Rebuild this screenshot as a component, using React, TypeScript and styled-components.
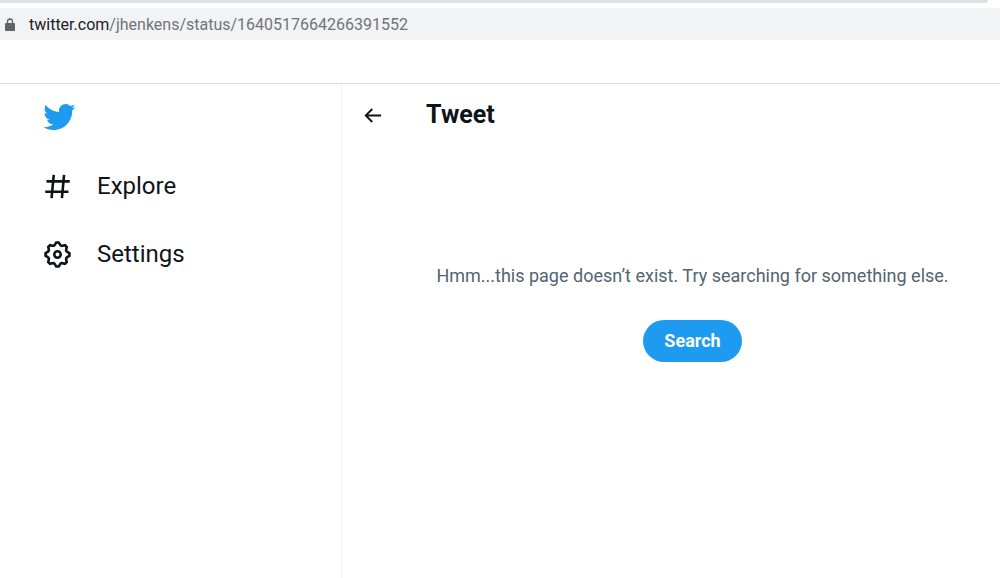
import React from "react";
import styled, { createGlobalStyle } from "styled-components";

const GlobalStyle = createGlobalStyle`
  * { box-sizing: border-box; }
  html, body, #root { height: 100%; }
  body {
    margin: 0;
    background: #ffffff;
    color: #0f1419;
    font-family: Roboto, "Liberation Sans", sans-serif;
  }
`;

const Page = styled.div`
  display: flex;
  flex-direction: column;
  min-height: 100%;
`;

const BrowserChrome = styled.div`
  border-bottom: 1px solid #d9dbdd;
  padding-bottom: 43px;
`;

const TabStrip = styled.div`
  height: 3px;
  margin-right: 12px;
  background: #dee1e6;
  border-bottom-right-radius: 3px;
`;

const AddressBar = styled.div`
  display: flex;
  align-items: center;
  gap: 13px;
  height: 32px;
  margin-top: 5px;
  padding: 2px 4px 0;
  background: #f1f3f4;
`;

const Address = styled.div`
  color: #70757a;
  font-size: 16px;
  line-height: 24px;
  white-space: nowrap;
`;

const Domain = styled.span`
  color: #202124;
`;

const Icon = styled.svg<{ $size: number }>`
  display: block;
  flex: none;
  width: ${(p) => p.$size}px;
  height: ${(p) => p.$size}px;
  fill: currentColor;
`;

const Body = styled.div`
  display: flex;
  flex: 1;
`;

const Sidebar = styled.header`
  flex: none;
  width: 342px;
  padding: 16px 0 0 42px;
  border-right: 1px solid #eff3f4;
`;

const LogoLink = styled.a`
  display: block;
  width: fit-content;
  color: #1d9bf0;
`;

const Nav = styled.nav`
  display: flex;
  flex-direction: column;
  align-items: flex-start;
  gap: 36px;
  margin-top: 36px;
`;

const NavLink = styled.a`
  display: flex;
  align-items: center;
  gap: 24px;
  color: #0f1419;
  font-size: 24px;
  line-height: 32px;
  text-decoration: none;
`;

const Main = styled.main`
  flex: 1;
  min-width: 0;
`;

const TitleBar = styled.div`
  display: flex;
  align-items: center;
  gap: 42px;
  height: 62px;
  padding-left: 19px;
`;

const BackButton = styled.button`
  padding: 0;
  border: 0;
  background: none;
  color: #0f1419;
  cursor: pointer;
`;

const Title = styled.h1`
  margin: 0;
  font-size: 25px;
  font-weight: 700;
  line-height: 32px;
`;

const EmptyState = styled.section`
  display: flex;
  flex-direction: column;
  align-items: center;
  gap: 32px;
  padding: 118px 0 0 43px;
`;

const Message = styled.p`
  margin: 0;
  color: #536471;
  font-size: 18px;
  line-height: 24px;
`;

const SearchLink = styled.a`
  padding: 0 21px;
  border-radius: 21px;
  background: #1d9bf0;
  color: #ffffff;
  font-size: 18px;
  font-weight: 700;
  line-height: 42px;
  text-decoration: none;
`;

const BIRD =
  "M23.643 4.937c-.835.37-1.732.62-2.675.733.962-.576 1.7-1.49 2.048-2.578-.9.534-1.897.922-2.958 1.13-.85-.904-2.06-1.47-3.4-1.47-2.572 0-4.658 2.086-4.658 4.66 0 .364.042.718.12 1.06-3.873-.195-7.304-2.05-9.602-4.868-.4.69-.63 1.49-.63 2.342 0 1.616.823 3.043 2.072 3.878-.764-.025-1.482-.234-2.11-.583v.06c0 2.257 1.605 4.14 3.737 4.568-.392.106-.803.162-1.227.162-.3 0-.593-.028-.877-.082.593 1.85 2.313 3.198 4.352 3.234-1.595 1.25-3.604 1.995-5.786 1.995-.376 0-.747-.022-1.112-.065 2.062 1.323 4.51 2.093 7.14 2.093 8.57 0 13.255-7.098 13.255-13.254 0-.2-.005-.402-.014-.602.91-.658 1.7-1.477 2.323-2.41z";
const HASH =
  "M10.09 3.098L9.72 7h5.99l.39-4.089 1.99.187L17.72 7h3.78v2h-3.97l-.56 6h3.53v2h-3.72l-.38 4.089-1.99-.187.36-3.902H8.78l-.38 4.089-1.99-.187L6.77 17H2.5v-2h4.46l.56-6H3.5V7h4.21l.39-4.089zM14.96 15l.56-6H9.53l-.56 6h5.99z";
const GEAR =
  "M10.54 1.75h2.92l1.57 2.36c.11.17.32.25.53.21l2.53-.59 2.17 2.17-.58 2.54c-.05.2.04.41.21.53l2.36 1.57v2.92l-2.36 1.57c-.17.12-.26.33-.21.53l.58 2.54-2.17 2.17-2.53-.59c-.21-.04-.42.04-.53.21l-1.57 2.36h-2.92l-1.58-2.36c-.11-.17-.32-.25-.52-.21l-2.54.59-2.17-2.17.58-2.54c.05-.2-.03-.41-.21-.53l-2.35-1.57v-2.92L4.1 8.97c.18-.12.26-.33.21-.53L3.73 5.9 5.9 3.73l2.54.59c.2.04.41-.04.52-.21l1.58-2.36zm1.07 2l-.98 1.47C10.05 6.08 9 6.5 7.99 6.27l-1.46-.34-.6.6.33 1.46c.24 1.01-.18 2.07-1.05 2.64l-1.46.98v.78l1.46.98c.87.57 1.29 1.63 1.05 2.64l-.33 1.46.6.6 1.46-.34c1.01-.23 2.06.19 2.64 1.05l.98 1.47h.78l.97-1.47c.58-.86 1.63-1.28 2.65-1.05l1.45.34.61-.6-.34-1.46c-.23-1.01.18-2.07 1.05-2.64l1.47-.98v-.78l-1.47-.98c-.87-.57-1.28-1.63-1.05-2.64l.34-1.46-.61-.6-1.45.34c-1.02.23-2.07-.19-2.65-1.05l-.97-1.47h-.78zM12 10.5c-.83 0-1.5.67-1.5 1.5s.67 1.5 1.5 1.5c.83 0 1.5-.67 1.5-1.5s-.67-1.5-1.5-1.5zM8.5 12c0-1.93 1.56-3.5 3.5-3.5 1.93 0 3.5 1.57 3.5 3.5s-1.57 3.5-3.5 3.5c-1.94 0-3.5-1.57-3.5-3.5z";
const ARROW =
  "M7.414 13l5.043 5.04-1.414 1.42L3.586 12l7.457-7.46 1.414 1.42L7.414 11H21v2H7.414z";

const LockIcon = styled.svg`
  display: block;
  flex: none;
  width: 12px;
  height: 14px;
`;

function Glyph({ path, size }: { path: string; size: number }) {
  return (
    <Icon viewBox="0 0 24 24" $size={size} aria-hidden="true">
      <path d={path} />
    </Icon>
  );
}

export default function App() {
  return (
    <>
      <GlobalStyle />
      <Page>
        <BrowserChrome>
          <TabStrip />
          <AddressBar>
            <LockIcon viewBox="0 0 12 14" aria-hidden="true">
              <rect x="1" y="5" width="10" height="8" rx="1" fill="#5f6368" />
              <path d="M3.5 5.5V3.5a2.5 2.5 0 0 1 5 0v2" fill="none" stroke="#5f6368" strokeWidth="1.3" />
            </LockIcon>
            <Address role="textbox" aria-label="Address">
              <Domain>twitter.com</Domain>/jhenkens/status/1640517664266391552
            </Address>
          </AddressBar>
        </BrowserChrome>
        <Body>
          <Sidebar>
            <LogoLink href="#" aria-label="Twitter">
              <Glyph path={BIRD} size={34} />
            </LogoLink>
            <Nav>
              <NavLink href="#explore">
                <Glyph path={HASH} size={31} />
                Explore
              </NavLink>
              <NavLink href="#settings">
                <Glyph path={GEAR} size={31} />
                Settings
              </NavLink>
            </Nav>
          </Sidebar>
          <Main>
            <TitleBar>
              <BackButton type="button" aria-label="Back">
                <Glyph path={ARROW} size={23} />
              </BackButton>
              <Title>Tweet</Title>
            </TitleBar>
            <EmptyState>
              <Message>Hmm...this page doesn’t exist. Try searching for something else.</Message>
              <SearchLink href="#search">Search</SearchLink>
            </EmptyState>
          </Main>
        </Body>
      </Page>
    </>
  );
}
